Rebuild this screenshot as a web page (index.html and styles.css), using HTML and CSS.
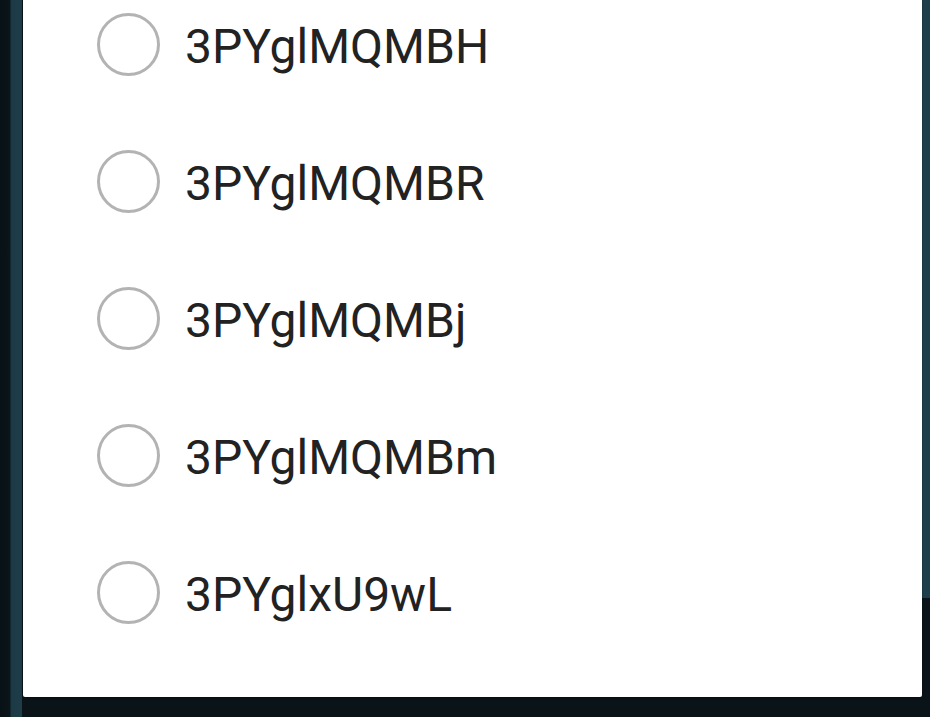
FILE: index.html
```html
<!DOCTYPE html>
<html>
<head>
<meta charset="utf-8">
<link rel="stylesheet" href="styles.css">
</head>
<body>
<div class="dialog">
  <div class="list">
    <div class="row"><span class="radio"></span><span class="label">3PYglMQMBH</span></div>
    <div class="row"><span class="radio"></span><span class="label">3PYglMQMBR</span></div>
    <div class="row"><span class="radio"></span><span class="label">3PYglMQMBj</span></div>
    <div class="row"><span class="radio"></span><span class="label">3PYglMQMBm</span></div>
    <div class="row"><span class="radio"></span><span class="label">3PYglxU9wL</span></div>
  </div>
</div>
</body>
</html>
```
FILE: styles.css
```css
html, body {
  margin: 0;
  padding: 0;
  height: 100%;
}
body {
  width: 930px;
  height: 717px;
  overflow: hidden;
  background:
    linear-gradient(to right, #081115 0, #0b1519 10px, #1c3a45 11px, #1e3d48 22px, transparent 22px) left top / 23px 717px no-repeat,
    linear-gradient(to bottom, #1f3e4b 0, #1f3e4b 598px, #0a1418 598px) right top / 8px 717px no-repeat,
    #0a1418;
  font-family: Roboto, "Noto Sans", sans-serif;
}
.dialog {
  margin-left: 23px;
  width: 899px;
  height: 697px;
  background: #ffffff;
  border-radius: 0 0 2px 2px;
  overflow: hidden;
  box-shadow: 0 1px 2px rgba(0,0,0,0.4);
}
.list {
  margin-top: -24px;
  display: flex;
  flex-direction: column;
}
.row {
  height: 137px;
  display: flex;
  align-items: center;
  padding-left: 74px;
}
.radio {
  width: 57px;
  height: 57px;
  border: 3px solid #b3b3b3;
  border-radius: 50%;
  flex: none;
}
.label {
  margin-left: 25px;
  font-size: 48px;
  color: #222222;
  line-height: 1;
  padding-top: 5px;
}
```
